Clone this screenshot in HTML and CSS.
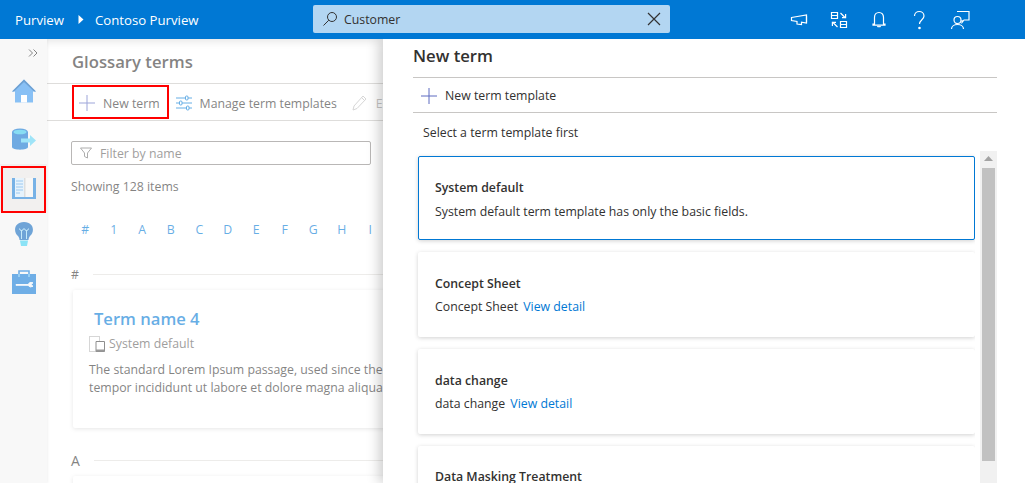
FILE: index.html
```html
<!DOCTYPE html>
<html lang="en">
<head>
<meta charset="utf-8">
<title>Glossary terms</title>
<link rel="stylesheet" href="styles.css">
</head>
<body>
<header class="topbar">
  <nav class="crumbs">
    <span>Purview</span>
    <svg class="crumb-arrow" width="6" height="9" viewBox="0 0 6 9"><path d="M0.5 0l5 4.500-5 4.500z" fill="#fff"/></svg>
    <span>Contoso Purview</span>
  </nav>
  <div class="search">
    <svg width="16" height="16" viewBox="0 0 16 16" fill="none" stroke="#333" stroke-width="1"><circle cx="10" cy="6" r="4.500"/><path d="M6.800 9.200L1.500 14.500"/></svg>
    <span class="search-text">Customer</span>
    <svg class="search-close" width="14" height="14" viewBox="0 0 14 14" stroke="#333" stroke-width="1.200"><path d="M1 1l12 12M13 1L1 13"/></svg>
  </div>
  <div class="top-icons">
    <svg width="18" height="18" viewBox="0 0 18 18" fill="none" stroke="#fff" stroke-width="1.200"><path d="M1.500 6.500l15-2.500v8l-5-.8v2.300L7 13v-2.500l-5.500-1z"/><path d="M16.500 5v6.500"/></svg>
    <svg width="18" height="18" viewBox="0 0 18 18" fill="none" stroke="#fff" stroke-width="1.200"><path d="M1.500 1.500h6v6h-6zM1.500 4.500h6M10.500 10.500h6v6h-6zM10.500 13.500h6"/><path d="M10.500 2l5 5M12 6.600h3.600V3M7.500 16l-5-5M6 11.400H2.400V15"/></svg>
    <svg width="18" height="18" viewBox="0 0 18 18" fill="none" stroke="#fff" stroke-width="1.200"><path d="M9 1.500c-3 0-4.500 2.200-4.500 5v6.500h-1.500v1.200h12v-1.200h-1.500v-6.500c0-2.800-1.500-5-4.500-5z"/><path d="M7.500 15c.3 1 2.700 1 3 0"/></svg>
    <svg width="18" height="20" viewBox="0 0 18 20" fill="none" stroke="#fff" stroke-width="1.200"><path d="M4.500 6c0-6 9.500-6 9.500 0 0 3.500-4.500 4-4.500 8"/><circle cx="9.500" cy="18" r=".7" fill="#fff"/></svg>
    <svg width="20" height="20" viewBox="0 0 20 20" fill="none" stroke="#fff" stroke-width="1.200"><path d="M7 1.500h12v8.500h-5l-2 2.500v-2.500"/><circle cx="7.500" cy="10" r="3.500"/><path d="M1.500 19c0-6 12-6 12 0"/></svg>
  </div>
</header>

<div class="workspace">
  <aside class="rail">
    <svg class="rail-toggle" width="10" height="8" viewBox="0 0 10 8" fill="none" stroke="#333" stroke-width="1"><path d="M1 0.500l3.500 3.500-3.500 3.500M5.500 0.500l3.500 3.500-3.500 3.500"/></svg>
    <div class="rail-item">
      <svg width="24" height="24" viewBox="0 0 24 24"><path d="M12 .500L0 12.500h3v11h18v-11h3z" fill="#3a97ee"/><path d="M12 .500L0 12.500h2L12 3l10 9.500h2z" fill="#0f63b5"/><path d="M9 16h6v7.500H9z" fill="#fff"/></svg>
    </div>
    <div class="rail-item">
      <svg width="24" height="22" viewBox="0 0 24 22"><path d="M0 4v15c0 3.500 16 3.500 16 0V4z" fill="#0f72cf"/><ellipse cx="8" cy="4" rx="8" ry="3.500" fill="#0f72cf"/><ellipse cx="8" cy="4" rx="6.500" ry="2.300" fill="#39c6ec"/><path d="M9 10.500h9V7l6 5.500-6 5.500v-3.500H9z" fill="#5fd3f3"/></svg>
    </div>
    <div class="rail-item rail-item-active">
      <svg width="24" height="21" viewBox="0 0 24 21"><path d="M0 0h24v21H0z" fill="#1e7fd6"/><path d="M3 0h9v19H3z" fill="#d7ebfb"/><path d="M12 0h9v19h-9z" fill="#f3f2f1"/><path d="M12 0h1.500v19H12z" fill="#c9c9c9"/><path d="M4 3h7M4 6h7M4 9h7M4 12h7M4 15h4" stroke="#5ba6e8" stroke-width="1"/></svg>
    </div>
    <div class="rail-item rail-item-tight">
      <svg width="18" height="24" viewBox="0 0 18 24"><path d="M9 0C-1 0-2 10 3 14c1 1 1.500 3 1.500 4h9c0-1 .5-3 1.500-4 5-4 4-14-6-14z" fill="#0f68bd"/><path d="M5 18.500h8L12 24H6z" fill="#3fd0f0"/><path d="M6.500 17V8M11.500 17V8M4.500 6.500a2 2 0 0 0 4 0M9.500 6.500a2 2 0 0 0 4 0" fill="none" stroke="#9fdcf7" stroke-width="1"/></svg>
    </div>
    <div class="rail-item">
      <svg width="24" height="24" viewBox="0 0 24 24"><path d="M0 4h24v20H0z" fill="#0f78d6"/><path d="M7 6.500V1h10v5.500" fill="none" stroke="#0f78d6" stroke-width="1.600"/><path d="M7 4v3M17 4v3" stroke="#64bbf0" stroke-width="1.600"/><path d="M4 14.500h12a3.800 3.800 0 0 1 5-1.700l-2 1.700 2 1.800a3.800 3.800 0 0 1-5-1h-12z" fill="#eef3f8" stroke="#eef3f8" stroke-width="1"/></svg>
    </div>
  </aside>

  <main class="content">
    <h1 class="page-title">Glossary terms</h1>
    <div class="toolbar">
      <div class="tool tool-new">
        <svg width="16" height="16" viewBox="0 0 16 16" stroke="#5c6bc0" stroke-width="1"><path d="M8 0v16M0 8h16"/></svg>
        <span>New term</span>
      </div>
      <div class="tool">
        <svg width="16" height="16" viewBox="0 0 16 16" fill="#fff" stroke="#0078d4" stroke-width="1"><path d="M0 3h16M0 8h16M0 13h16"/><rect x="9.500" y="1" width="2.500" height="4" rx="1"/><rect x="3.500" y="6" width="2.500" height="4" rx="1"/><rect x="10.500" y="11" width="2.500" height="4" rx="1"/></svg>
        <span>Manage term templates</span>
      </div>
      <div class="tool tool-muted">
        <svg width="16" height="16" viewBox="0 0 16 16" fill="none" stroke="#bbb" stroke-width="1"><path d="M1 15l1-4 9-10 3 3-9 9.500zM9.500 2.500l3 3"/></svg>
        <span>Edit</span>
      </div>
    </div>
    <div class="filter">
      <svg width="12" height="12" viewBox="0 0 12 12" fill="none" stroke="#777" stroke-width="1"><path d="M.5 1h11l-4 5v5l-3-1.500V6z"/></svg>
      <span>Filter by name</span>
    </div>
    <p class="count">Showing 128 items</p>
    <div class="alpha">
      <span>#</span><span>1</span><span>A</span><span>B</span><span>C</span><span>D</span><span>E</span><span>F</span><span>G</span><span>H</span><span>I</span>
    </div>
    <div class="section-head section-first"><span>#</span></div>
    <article class="term-card">
      <h2 class="term-name">Term name 4</h2>
      <div class="term-template">
        <svg width="16" height="16" viewBox="0 0 16 16" fill="none"><path d="M.5.500h10v15H.5z" stroke="#777" stroke-dasharray="1 1"/><path d="M7 5.500h8.500v10H7z" fill="#fff" stroke="#444"/><path d="M7 13.500h8.500v2H7z" fill="#555"/></svg>
        <span>System default</span>
      </div>
      <p class="term-desc">The standard Lorem Ipsum passage, used since the 1500s, is reproduced below for those interested<br>tempor incididunt ut labore et dolore magna aliqua. Ut enim ad minim veniam, quis nostrud exercitation</p>
    </article>
    <div class="section-head"><span class="section-a">A</span></div>
    <article class="term-card"></article>
  </main>
</div>

<div class="scrim"></div>
<div class="mark mark-rail"></div>
<div class="mark mark-new"></div>

<section class="panel">
  <h2 class="panel-title">New term</h2>
  <div class="panel-action">
    <svg width="16" height="16" viewBox="0 0 16 16" stroke="#5c6bc0" stroke-width="1"><path d="M8 0v16M0 8h16"/></svg>
    <span>New term template</span>
  </div>
  <p class="panel-hint">Select a term template first</p>
  <div class="picker">
    <div class="picker-list">
      <div class="tpl tpl-selected">
        <h3>System default</h3>
        <p>System default term template has only the basic fields.</p>
      </div>
      <div class="tpl">
        <h3>Concept Sheet</h3>
        <p>Concept Sheet <a href="#">View detail</a></p>
      </div>
      <div class="tpl">
        <h3>data change</h3>
        <p>data change <a href="#">View detail</a></p>
      </div>
      <div class="tpl tpl-clipped">
        <h3>Data Masking Treatment</h3>
      </div>
    </div>
    <div class="scrollbar">
      <svg class="scroll-up" width="9" height="5" viewBox="0 0 9 5"><path d="M4.500 0l4.500 5H0z" fill="#a3a3a3"/></svg>
      <div class="scroll-thumb"></div>
    </div>
  </div>
</section>
</body>
</html>
```
FILE: styles.css
```css
* { box-sizing: border-box; }
html, body { height: 100%; }
body {
  margin: 0;
  overflow: hidden;
  background: #fff;
  color: #323130;
  font-family: "Open Sans", "Noto Sans", "Liberation Sans", sans-serif;
  font-size: 12.3px;
  display: flex;
  flex-direction: column;
}
h1, h2, h3, p { margin: 0; }

.topbar {
  flex: none;
  height: 39px;
  background: #0078d4;
  display: flex;
  align-items: center;
  color: #fff;
  position: relative;
  z-index: 5;
}
.crumbs {
  width: 313px;
  padding-left: 15px;
  display: flex;
  align-items: center;
  font-size: 13.2px;
}
.crumb-arrow { margin: 0 11px 0 14px; }
.search {
  width: 357px;
  height: 28px;
  margin-top: -1px;
  background: #b3d6f2;
  border-radius: 2px;
  display: flex;
  align-items: center;
  padding: 0 9px;
  color: #323130;
}
.search-text { margin-left: 6px; flex: 1; }
.top-icons {
  display: flex;
  align-items: center;
  gap: 22px;
  margin-left: 120px;
}

.workspace { flex: 1; display: flex; min-height: 0; }
.rail {
  flex: none;
  width: 47px;
  background: #f4f4f4;
  box-shadow: 1px 0 2px rgba(0,0,0,.08);
  display: flex;
  flex-direction: column;
  padding-top: 10px;
  position: relative;
}
.rail-toggle { align-self: flex-end; margin: 0 9px 10px 0; }
.rail-item {
  flex: none;
  height: 48px;
  display: flex;
  align-items: center;
  justify-content: center;
}
.rail-item-active { margin-top: 1px; background: #e9e7e5; }
.rail-item-tight { margin-top: -2px; }

.content {
  flex: 1;
  min-width: 0;
  overflow: hidden;
  box-shadow: inset 0 9px 8px -7px rgba(0,0,0,.18);
}
.page-title {
  padding: 11px 0 0 25px;
  height: 44px;
  font-size: 16.7px;
  font-weight: 600;
  color: #323130;
}
.toolbar {
  height: 38px;
  border-top: 1px solid #c8c6c4;
  border-bottom: 1px solid #c8c6c4;
  padding: 2px 0 0 32px;
  display: flex;
  align-items: center;
  gap: 8px;
  white-space: nowrap;
}
.tool { display: flex; align-items: center; gap: 8px; }
.tool-new { margin-right: 8px; }
.tool-muted { color: #a19f9d; margin-left: 7px; }
.filter {
  width: 300px;
  height: 24px;
  margin: 20px 0 0 24px;
  border: 1px solid #8a8886;
  border-radius: 2px;
  display: flex;
  align-items: center;
  gap: 8px;
  padding-left: 8px;
  color: #605e5c;
}
.count { margin: 13px 0 0 24px; color: #323130; line-height: 18px; }
.alpha {
  display: flex;
  margin: 25px 0 0 24px;
  color: #0078d4;
  line-height: 18px;
}
.alpha span { width: 28.5px; text-align: center; flex: none; }
.section-head {
  margin: 24px 0 0 24px;
  display: flex;
  align-items: center;
  gap: 14px;
  line-height: 18px;
}
.section-head::after { content: ""; flex: 1; height: 1px; margin-top: -2px; background: #e1dfdd; }
.section-first { margin-top: 27px; }
.section-a { font-size: 14px; }
.term-card {
  margin: 6px 0 0 26px;
  height: 138px;
  padding: 16px;
  background: #fff;
  box-shadow: 0 1px 4px rgba(0,0,0,.16);
  border-radius: 2px;
  white-space: nowrap;
  overflow: hidden;
}
.term-name {
  padding-left: 5px;
  font-size: 16.6px;
  line-height: 26px;
  font-weight: 600;
  color: #0078d4;
}
.term-template { display: flex; align-items: center; gap: 4px; margin-top: 3px; color: #605e5c; }
.term-desc { margin-top: 9px; line-height: 18px; color: #323130; }

.scrim {
  position: absolute;
  inset: 39px 0 0 0;
  background: rgba(255,255,255,.4);
  z-index: 1;
}
.mark { position: absolute; border: 2px solid #f00; z-index: 2; }
.mark-rail { left: 1px; top: 166px; width: 45px; height: 47px; }
.mark-new { left: 72px; top: 85px; width: 97px; height: 34px; }

.panel {
  position: absolute;
  left: 383px;
  right: 0;
  top: 39px;
  bottom: 0;
  z-index: 3;
  background: #fff;
  box-shadow: -4px 0 12px rgba(0,0,0,.2);
  padding-left: 30px;
  display: flex;
  flex-direction: column;
  overflow: hidden;
}
.panel-title {
  flex: none;
  height: 39px;
  margin-right: 28px;
  padding-top: 5px;
  font-size: 16.7px;
  font-weight: 600;
  line-height: 24px;
  border-bottom: 1px solid #c8c6c4;
}
.panel-action {
  flex: none;
  height: 35px;
  margin-right: 28px;
  padding: 1px 0 0 8px;
  display: flex;
  align-items: center;
  gap: 8px;
  border-bottom: 1px solid #c8c6c4;
}
.panel-hint { flex: none; margin: 11px 0 0 10px; line-height: 18px; }
.picker { flex: 1; min-height: 0; display: flex; margin-top: 9px; }
.picker-list {
  width: 562px;
  padding: 5px 0 0 5px;
  display: flex;
  flex-direction: column;
  gap: 12px;
  overflow: hidden;
}
.tpl {
  flex: none;
  width: 557px;
  height: 85px;
  padding: 23px 16px 0 17px;
  border-radius: 2px;
  background: #fff;
  box-shadow: 0 1px 4px rgba(0,0,0,.18);
}
.tpl-selected { border: 1px solid #0078d4; padding: 22px 16px 0 16px; height: 84px; }
.tpl h3 { font-size: 12.3px; line-height: 18px; font-weight: 600; }
.tpl p { margin-top: 5px; line-height: 18px; }
.tpl-selected p { margin-top: 6px; }
.tpl a { margin-left: 2px; color: #0078d4; text-decoration: none; }
.tpl-clipped { height: 42px; padding-top: 22px; }
.scrollbar {
  flex: none;
  width: 17px;
  margin-left: 5px;
  background: #f1f1f1;
  display: flex;
  flex-direction: column;
  align-items: center;
}
.scroll-up { margin-top: 5px; }
.scroll-thumb { width: 13px; height: 293px; margin-top: 7px; background: #c1c1c1; }
```
